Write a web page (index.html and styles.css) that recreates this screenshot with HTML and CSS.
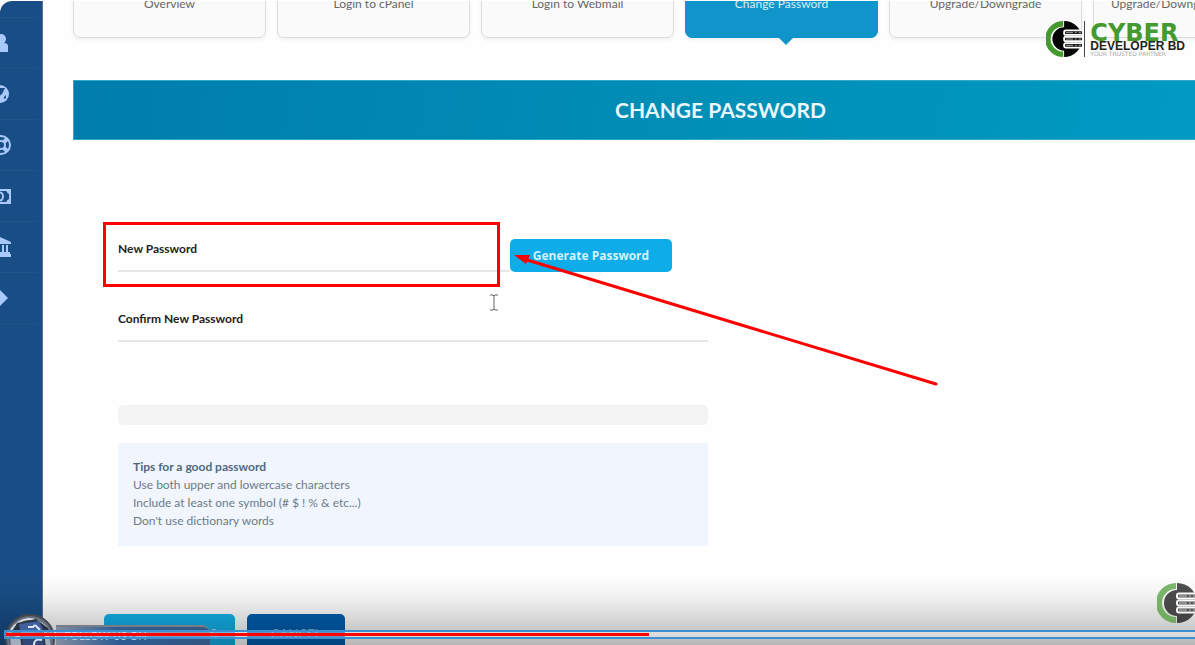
FILE: index.html
```
<!DOCTYPE html>
<html lang="en">
<head>
<meta charset="utf-8">
<title>Change Password</title>
<link rel="stylesheet" href="styles.css">
</head>
<body>
<svg class="defs" aria-hidden="true">
  <symbol id="server-mark" viewBox="0 0 42 40">
    <path class="mark-green" d="M19 0A20 20 0 0 0 19 40V34A14 14 0 0 1 19 6Z"/>
    <path class="mark-dark" d="M20 0A20 20 0 0 1 20 40V33A13 13 0 0 1 20 7Z"/>
    <g class="mark-bars">
      <rect x="20" y="10.500" width="21" height="5" rx="2"/>
      <rect x="20" y="17.500" width="21" height="5" rx="2"/>
      <rect x="20" y="24.500" width="21" height="5" rx="2"/>
    </g>
    <path class="mark-slots" d="M22 13h8M32 13h2M36 13h3M22 20h8M32 20h2M36 20h3M22 27h8M32 27h2M36 27h3"/>
  </symbol>
</svg>

<div class="screen">
  <nav class="sidebar" aria-label="Main">
    <a class="side-link" href="#account" aria-label="Account"><svg viewBox="0 0 20 20"><circle cx="10" cy="6" r="5"/><path d="M1 19v-6q0-3 3-3h9q4 0 4 3v6z"/></svg></a>
    <a class="side-link" href="#domains" aria-label="Domains"><svg viewBox="0 0 20 20"><circle cx="9" cy="10" r="9"/><path class="cut" d="M8 4l6 0-3 6-4 3-1-4zM13 13l2-2v3l-2 1z"/></svg></a>
    <a class="side-link" href="#support" aria-label="Support"><svg viewBox="0 0 20 20"><circle class="ring" cx="10" cy="10" r="9"/><circle class="ring" cx="10" cy="10" r="4"/><path class="spokes" d="M4 4l3 3M16 4l-3 3M4 16l3-3M16 16l-3-3"/></svg></a>
    <a class="side-link" href="#billing" aria-label="Billing"><svg viewBox="0 0 20 20"><rect class="ring" x="0" y="4" width="19" height="13"/><ellipse class="ring" cx="9" cy="10.500" rx="3" ry="4"/><path d="M15 4h4v4q-3 0-4-4M15 17h4v-4q-3 0-4 4"/></svg></a>
    <a class="side-link" href="#bank" aria-label="Bank"><svg viewBox="0 0 20 20"><path d="M9 0l11 5v2H-2V5zM1 8h3v8H1zM6 8h3v8H6zM11 8h2v8h-2zM15 8h2v8h-2zM0 15h19v2h1v3H-2v-3h2z"/></svg></a>
    <a class="side-link" href="#logout" aria-label="Log out"><svg viewBox="0 0 20 20"><path d="M0 7h9V2l8 8-8 8v-5H0z"/></svg></a>
  </nav>

  <main class="main">
    <nav class="tabs" aria-label="Service">
      <a class="tab" href="#overview">Overview</a>
      <a class="tab" href="#cpanel">Login to cPanel</a>
      <a class="tab" href="#webmail">Login to Webmail</a>
      <a class="tab tab-active" href="#password">Change Password</a>
      <a class="tab" href="#upgrade">Upgrade/Downgrade</a>
      <a class="tab" href="#options">Upgrade/Downgrade Options</a>
    </nav>
    <h1 class="banner">CHANGE PASSWORD</h1>
    <form class="form">
      <div class="fields">
        <div class="generate-row">
          <div class="field">
            <label for="new-password">New Password</label>
            <input id="new-password" type="password">
          </div>
          <button class="generate" type="button">Generate Password</button>
        </div>
        <div class="field">
          <label for="confirm-password">Confirm New Password</label>
          <input id="confirm-password" type="password">
        </div>
        <div class="meter"></div>
        <div class="tips">
          <p class="tips-title">Tips for a good password</p>
          <p>Use both upper and lowercase characters</p>
          <p>Include at least one symbol (# $ ! % &amp; etc...)</p>
          <p>Don't use dictionary words</p>
        </div>
      </div>
      <div class="actions">
        <button class="save" type="submit" aria-label="Save changes">S</button>
        <button class="cancel" type="button">CANCEL</button>
      </div>
    </form>
  </main>

  <div class="brand">
    <svg class="brand-mark" aria-hidden="true"><use href="#server-mark"/></svg>
    <div class="brand-text">
      <span class="brand-name">CYBER</span>
      <span class="brand-sub">DEVELOPER BD</span>
      <span class="brand-tag">YOUR TRUSTED PARTNER</span>
    </div>
  </div>

  <div class="highlight"></div>
  <svg class="arrow" viewBox="0 0 424 130" aria-hidden="true"><path class="arrow-line" d="M10 4L422 129"/><path class="arrow-head" d="M0 0L16 0L12 9Z"/></svg>
  <svg class="cursor" viewBox="0 0 10 17" aria-hidden="true"><path d="M1 1h3l1 1 1-1h3M5 2v13M1 16h3l1-1 1 1h3"/></svg>

  <div class="shade"></div>
  <div class="follow">
    <svg class="follow-badge" viewBox="0 0 52 52" aria-hidden="true">
      <circle cx="26" cy="26" r="24" fill="#667080" stroke="#45484f" stroke-width="2"/>
      <path d="M7 17Q23-4 43 15" fill="none" stroke="#d9dde3" stroke-width="2"/>
      <path d="M5 24L13 10 32 6 44 15 47 42H8Z" fill="#28323f"/>
      <path d="M15 11l20-3 5 11-23 2z" fill="#3f5f9f"/>
      <path d="M6 25l10-3 3 25H8zM40 19l5 1 3 24h-5z" fill="#a2aebf"/>
      <path d="M18 23l21-1 3 29H20z" fill="#304779"/>
      <path d="M24 14h5q2-3 4 0l3 3M38 27q-8-2-8 5v12M26 34h11" fill="none" stroke="#dfe5ed" stroke-width="2"/>
    </svg>
    <span class="follow-text">FOLLOW US ON</span>
  </div>
  <svg class="watermark" aria-hidden="true"><use href="#server-mark"/></svg>
  <div class="player"><div class="played"></div></div>
</div>
</body>
</html>
```
FILE: styles.css
```
* { box-sizing: border-box; }

body {
  margin: 0;
  background: #fff;
  font-family: Lato, sans-serif;
  font-size: 12px;
  overflow: hidden;
}

.defs { position: absolute; width: 0; height: 0; }

.mark-green { fill: #459a2f; }
.mark-dark { fill: #050505; }
.mark-bars { fill: #111; stroke: #fff; stroke-width: 2; }
.mark-slots { fill: none; stroke: #bbb; stroke-width: 1; }

.screen {
  position: relative;
  display: flex;
  height: calc(100vh - 1px);
  margin-top: 1px;
  overflow: hidden;
  border-top-left-radius: 12px;
  background: #fefefe;
}

.sidebar {
  flex: 0 0 43px;
  padding-top: 16px;
  background: #184d85;
  border-right: 1px solid #60708a;
}

.side-link {
  display: flex;
  align-items: center;
  height: 51px;
  margin-right: 4px;
  border-top: 1px solid #205489;
  overflow: hidden;
}

.side-link:last-child { border-bottom: 1px solid #205489; height: 52px; }

.side-link svg {
  width: 20px;
  height: 20px;
  margin-left: -9px;
  fill: #a9c8fb;
}

.side-link .cut { fill: #184d85; }
.side-link .ring { fill: none; stroke: #a9c8fb; stroke-width: 2; }
.side-link .spokes { stroke: #a9c8fb; stroke-width: 4; }

.main {
  flex: 1 0 0;
  min-width: 0;
  margin-right: -172px;
  padding-left: 30px;
}

.tabs {
  display: flex;
  gap: 11px;
  align-items: flex-end;
  height: 37px;
}

.tab {
  position: relative;
  flex: 0 0 193px;
  height: 100px;
  padding-top: 57px;
  border: 1px solid #dcdcdc;
  border-radius: 7px;
  background: #fafafa;
  box-shadow: 0 2px 4px #0000000f;
  color: #666;
  line-height: 16px;
  text-align: center;
  text-decoration: none;
}

.tab-active {
  border-color: #1095cb;
  background: #1095cb;
  color: #d5effb;
}

.tab-active::after {
  content: "";
  position: absolute;
  top: 100%;
  left: calc(50% - 4px);
  border: 8px solid transparent;
  border-top-color: #1095cb;
  border-bottom: 0;
}

.banner {
  margin: 42px 0 0;
  border: 1px solid #35a8c8;
  border-right: 0;
  background: linear-gradient(100deg, #007dad, #008fb7 50%, #009ec7);
  color: #e8f8fc;
  font-size: 21px;
  font-weight: 700;
  line-height: 58px;
  text-align: center;
}

.form { padding: 99px 31px 0; }
.fields { max-width: 590px; margin-left: 14px; }

.generate-row {
  display: flex;
  align-items: flex-end;
  margin-bottom: 37px;
  padding-right: 36px;
}

.generate-row .field { flex: 1; }

.field { display: flex; flex-direction: column; padding-top: 2px; }

.field label {
  color: #222;
  font-weight: 700;
  line-height: 16px;
}

.field input {
  width: 100%;
  height: 15px;
  padding: 0;
  border: 0;
  border-bottom: 2px solid #e7e7e7;
  background: none;
  outline: 0;
}

.generate {
  width: 162px;
  height: 33px;
  padding: 0;
  border: 0;
  border-radius: 5px;
  background: #0eace9;
  color: #d4f2fd;
  font: 700 12px "Open Sans", sans-serif;
}

.meter {
  height: 20px;
  margin-top: 63px;
  border-radius: 5px;
  background: #f3f3f3;
}

.tips {
  margin-top: 18px;
  padding: 15px 15px 16px;
  background: #f1f5fd;
  color: #6b7c89;
  line-height: 18px;
}

.tips p { margin: 0; }
.tips .tips-title { color: #4d6a7c; font-weight: 700; }

.actions { display: flex; gap: 12px; margin-top: 68px; }

.actions button {
  height: 40px;
  padding: 0;
  border: 0;
  border-radius: 5px 5px 0 0;
  font: 13px Lato, sans-serif;
}

.actions .save {
  width: 131px;
  padding-right: 18px;
  background: #12b2ea;
  color: #b5e2f5;
  text-align: right;
}

.actions .cancel { width: 98px; background: #005eaf; color: #8fb0cf; }

.brand {
  position: absolute;
  top: 20px;
  right: 10px;
  display: flex;
  align-items: center;
}

.brand-mark { width: 38px; height: 36px; }

.brand-text {
  display: flex;
  flex-direction: column;
  border-left: 1px solid #444;
  padding-top: 4px;
  padding-left: 5px;
}

.brand-name {
  color: #459a2f;
  font: 700 24px/16px "DejaVu Sans", sans-serif;
}

.brand-sub {
  color: #222;
  font: 700 12px/10px "Liberation Sans", sans-serif;
}

.brand-tag {
  color: #aaa;
  font: 6px/6px "DejaVu Sans", sans-serif;
}

.highlight {
  position: absolute;
  top: 221px;
  left: 103px;
  width: 397px;
  height: 65px;
  border: 3px solid #f00;
}

.arrow { position: absolute; top: 254px; left: 514px; width: 424px; height: 130px; overflow: visible; }
.arrow-line { fill: none; stroke: #f00; stroke-width: 3; stroke-linecap: round; }
.arrow-head { fill: #f00; }

.cursor { position: absolute; top: 293px; left: 489px; width: 10px; height: 17px; fill: none; stroke: #666; stroke-width: 1; }

.shade {
  position: absolute;
  right: 0;
  bottom: 0;
  left: 0;
  height: 70px;
  background: linear-gradient(#0000, #0000000c 30%, #00000048);
}

.follow {
  position: absolute;
  bottom: -20px;
  left: 4px;
  display: flex;
  align-items: flex-start;
}

.follow-badge { width: 52px; height: 52px; }

.follow-text {
  width: 154px;
  height: 20px;
  margin-top: 12px;
  padding-left: 8px;
  border-top: 2px solid #777c86;
  border-radius: 0 8px 0 0;
  background: linear-gradient(90deg, #808da0, #2d5d93 40%, #315681);
  color: #bfc9d4;
  font: 11px/17px Lato, sans-serif;
}

.watermark { position: absolute; right: -4px; bottom: 22px; width: 42px; height: 40px; opacity: 0.700; }

.player {
  position: absolute;
  right: -4px;
  bottom: 6px;
  left: 4px;
  height: 9px;
  border: 2px solid #3b8fd3;
  background: #ffffff66;
}

.played { width: 54%; height: 3px; margin-top: 1px; background: #f00; }
```
